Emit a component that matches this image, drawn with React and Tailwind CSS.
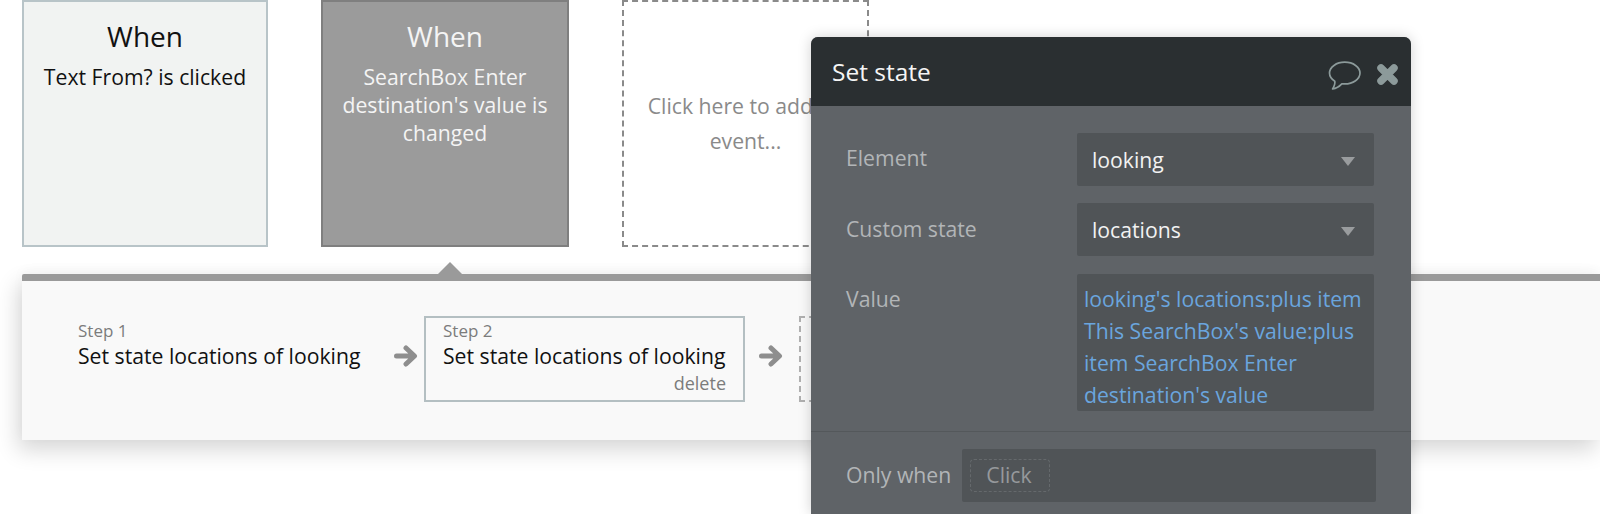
import React from "react";

const font = "font-['Open_Sans',sans-serif]";

function WhenCard({ dark, lines }) {
  return (
    <div
      className={`flex h-[247px] flex-col items-center border-2 px-2 pt-[13px] text-center ${
        dark ? "w-[248px] border-[#7f7f7f] bg-[#9b9b9b] text-[#f4f4f4]" : "w-[246px] border-[#b8c4c8] bg-[#f1f3f2] text-[#111]"
      }`}
    >
      <div className="text-[28px] leading-[42px]">When</div>
      <div className="mt-[6px] text-[21.2px] leading-[28px]">
        {lines.map((l) => (
          <div key={l}>{l}</div>
        ))}
      </div>
    </div>
  );
}

function Arrow() {
  return (
    <svg width="24" height="24" viewBox="0 0 24 24" fill="none" className="shrink-0 text-[#8e8e8e]">
      <path
        d="M2.5 12H20M12 4l8.5 8-8.5 8"
        stroke="currentColor"
        strokeWidth="5"
        strokeLinecap="round"
        strokeLinejoin="round"
      />
    </svg>
  );
}

function Caret() {
  return <div className="mt-[3px] h-0 w-0 border-x-[7.5px] border-t-[9px] border-x-transparent border-t-[#999c9e]" />;
}

function Select({ value }) {
  return (
    <div className="flex h-[53px] w-[297px] items-center justify-between rounded-[2px] bg-[#505457] pl-[15px] pr-[19px] text-[21.2px] text-[#f2f2f2]">
      <span className="pt-[1px]">{value}</span>
      <Caret />
    </div>
  );
}

export default function App() {
  return (
    <div className={`relative h-[514px] w-[1600px] overflow-hidden bg-white ${font}`}>
      <div className="flex h-[247px] gap-[53px] pl-[22px]">
        <WhenCard lines={["Text From? is clicked"]} />
        <WhenCard dark lines={["SearchBox Enter", "destination's value is", "changed"]} />
        <div className="flex h-[247px] w-[247px] items-center justify-center border-2 border-dashed border-[#8a8a8a] bg-white px-2 pb-[2px] text-center text-[21.2px] leading-[35px] text-[#8a8a8a]">
          <div>
            Click here to add an
            <br />
            event...
          </div>
        </div>
      </div>

      <div className="relative ml-[22px] mt-[27px] h-[166px] rounded-tl-[2px] border-t-[7px] border-[#9a9a9a] bg-[#f9f9f9] shadow-[-4px_10px_22px_rgba(0,0,0,0.16),0_-4px_12px_rgba(0,0,0,0.03)]">
        <div className="absolute left-[416px] top-[-19px] h-0 w-0 border-x-[12px] border-b-[12px] border-x-transparent border-b-[#9a9a9a]" />
        <div className="flex items-start pl-[36px] pt-[35px]">
          <div className="flex h-[86px] w-[321px] flex-col pl-[20px] pt-[4px]">
            <div className="text-[17px] leading-[22px] text-[#7c7c7c]">Step 1</div>
            <div className="text-[21.2px] leading-[28px] text-[#111]">Set state locations of looking</div>
          </div>
          <div className="flex h-[86px] w-[45px] items-center pb-[6px] pl-[15px]">
            <Arrow />
          </div>
          <div className="flex h-[86px] w-[321px] flex-col border-2 border-[#b4bfc2] px-[17px] pt-[2px]">
            <div className="text-[17px] leading-[22px] text-[#7c7c7c]">Step 2</div>
            <div className="text-[21.2px] leading-[28px] text-[#111]">Set state locations of looking</div>
            <div className="text-right text-[18px] leading-[27px] text-[#7c7c7c]">delete</div>
          </div>
          <div className="flex h-[86px] w-[54px] items-center pb-[6px] pl-[14px]">
            <Arrow />
          </div>
          <div className="h-[86px] w-[320px] border-2 border-dashed border-[#b0b0b0]" />
        </div>
      </div>

      <div className="absolute bottom-0 left-[811px] top-[37px] w-[600px] overflow-hidden rounded-t-[7px] bg-[#5f6367] shadow-[0_0_14px_rgba(0,0,0,0.18)]">
        <div className="flex h-[69px] items-center justify-between bg-[#2a2f31] pl-[21px] pr-[12px] text-[24.5px] text-[#f5f5f5]">
          <span className="pt-[2px]">Set state</span>
          <div className="mt-[5px] flex items-center gap-[15px]">
            <svg
              width="33"
              height="29"
              viewBox="0 0 33 28"
              preserveAspectRatio="none"
              fill="none"
              className="mt-[3px] text-[#8c9a9a]"
            >
              <path
                d="M16.8 1.2C8.3 1.2 1.5 5.9 1.5 11.6c0 3.2 2.1 6 5.3 7.9.5 2.4-.7 5-2.2 7.5 3.6-.6 7-2.7 9.2-5 .9.1 1.9.2 2.9.2 8.5 0 15.3-4.9 15.3-10.6S25.3 1.2 16.8 1.2Z"
                stroke="currentColor"
                strokeWidth="1.7"
                strokeLinejoin="round"
              />
            </svg>
            <svg width="23" height="23" viewBox="0 0 23 23" fill="none" className="text-[#8c9a9a]">
              <path d="M5 5l13 13M18 5L5 18" stroke="currentColor" strokeWidth="7.5" strokeLinecap="round" />
            </svg>
          </div>
        </div>

        <div className="grid grid-cols-[231px_297px] pl-[35px] pt-[27px] text-[21.2px]">
          <div className="pt-[11px] leading-[28px] text-[#b2b5b7]">Element</div>
          <Select value="looking" />
          <div className="mt-[17px] pt-[12px] leading-[28px] text-[#b2b5b7]">Custom state</div>
          <div className="mt-[17px]">
            <Select value="locations" />
          </div>
          <div className="mt-[18px] pt-[11px] leading-[28px] text-[#b2b5b7]">Value</div>
          <div className="mt-[18px] h-[137px] rounded-[2px] bg-[#505457] pl-[7px] pt-[9px] leading-[32px] text-[#6aa5de]">
            looking's locations:plus item
            <br />
            This SearchBox's value:plus
            <br />
            item SearchBox Enter
            <br />
            destination's value
          </div>
        </div>

        <div className="mt-[20px] border-t border-[#54585b] pl-[35px] pt-[17px]">
          <div className="flex items-center">
            <div className="w-[116px] pb-[2px] text-[21.2px] leading-[28px] text-[#b2b5b7]">Only when</div>
            <div className="flex h-[53px] w-[414px] items-center rounded-[2px] bg-[#505457] pl-[8px]">
              <div className="flex h-[33px] w-[80px] items-center justify-center rounded-[4px] border border-dashed border-[#65696c] pb-[2px] pr-[2px] text-[21.2px] leading-[28px] text-[#96999c]">
                Click
              </div>
            </div>
          </div>
        </div>
      </div>
    </div>
  );
}
